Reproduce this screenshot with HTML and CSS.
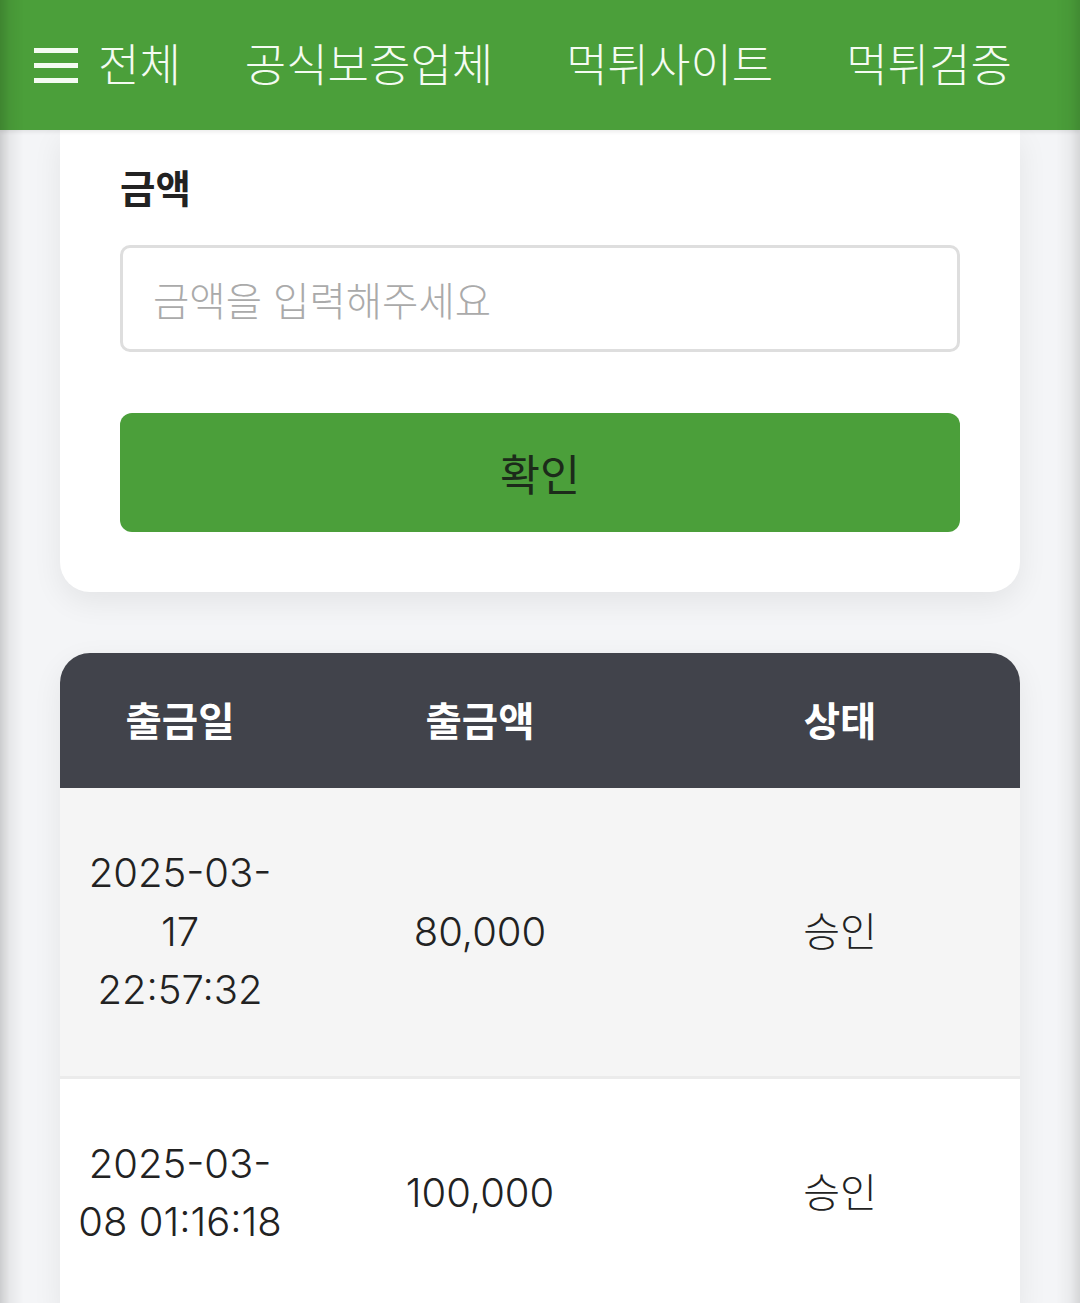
FILE: index.html
```html
<!DOCTYPE html>
<html lang="ko">
<head>
<meta charset="utf-8">
<title>출금</title>
<link rel="stylesheet" href="styles.css">
</head>
<body>
<div class="edge-shade"></div>
<header class="topbar">
  <nav class="nav">
    <a class="nav-item nav-first" href="#">
      <span class="burger"><span></span><span></span><span></span></span>
      <span>전체</span>
    </a>
    <a class="nav-item" href="#">공식보증업체</a>
    <a class="nav-item" href="#">먹튀사이트</a>
    <a class="nav-item" href="#">먹튀검증</a>
  </nav>
</header>
<main class="main">
  <section class="card">
    <label class="label" for="amount">금액</label>
    <input class="input" id="amount" type="text" placeholder="금액을 입력해주세요">
    <button class="btn" type="button">확인</button>
  </section>

  <section class="table">
    <div class="thead">
      <div class="cell">출금일</div>
      <div class="cell">출금액</div>
      <div class="cell">상태</div>
    </div>
    <div class="row row-alt">
      <div class="cell">2025-03-<br>17<br>22:57:32</div>
      <div class="cell">80,000</div>
      <div class="cell">승인</div>
    </div>
    <div class="row">
      <div class="cell">2025-03-<br>08 01:16:18</div>
      <div class="cell">100,000</div>
      <div class="cell">승인</div>
    </div>
  </section>
</main>
</body>
</html>
```

FILE: styles.css
```css
* { box-sizing: border-box; }

html, body {
  margin: 0;
  padding: 0;
}

body {
  background: #f4f5f7;
  font-family: Inter, "Noto Sans CJK KR", sans-serif;
  color: #222;
  overflow: hidden;
}

.edge-shade {
  position: fixed;
  inset: 0;
  pointer-events: none;
  z-index: 10;
  background:
    linear-gradient(to right, rgba(0,0,0,0.16) 0, rgba(0,0,0,0.05) 10px, rgba(0,0,0,0) 24px),
    linear-gradient(to left, rgba(0,0,0,0.12) 0, rgba(0,0,0,0.04) 10px, rgba(0,0,0,0) 24px);
}

.topbar {
  height: 130px;
  background: #4b9f3a;
  position: relative;
  z-index: 5;
  box-shadow: 0 2px 4px rgba(0,0,0,0.08);
}

.nav {
  height: 100%;
  display: flex;
  align-items: center;
  gap: 73px;
  padding: 0 0 6px 34px;
}

.nav-item {
  display: flex;
  align-items: center;
  color: #f4fbf2;
  text-decoration: none;
  font-family: "Noto Sans CJK KR", sans-serif;
  font-size: 45px;
  font-weight: 300;
  white-space: nowrap;
  line-height: 1;
}

.nav-first {
  gap: 20px;
  margin-right: -9px;
}

.burger {
  display: flex;
  flex-direction: column;
  gap: 10px;
  width: 44px;
  margin-top: 6px;
}

.burger span {
  display: block;
  height: 5px;
  background: #f4fbf2;
}

.main {
  padding: 0 60px;
}

.card {
  background: #fff;
  border-radius: 0 0 30px 30px;
  box-shadow: 0 10px 30px rgba(0,0,0,0.07);
  padding: 30px 60px 60px;
  display: flex;
  flex-direction: column;
}

.label {
  font-family: "Noto Sans CJK KR", sans-serif;
  font-size: 38.5px;
  font-weight: 700;
  line-height: 52px;
  color: #222;
}

.input {
  margin-top: 33px;
  height: 107px;
  border: 3px solid #dedede;
  border-radius: 10px;
  padding: 0 30px;
  font-family: "Noto Sans CJK KR", sans-serif;
  font-size: 39.5px;
  font-weight: 300;
  color: #222;
  outline: none;
}

.input::placeholder {
  color: #aaa;
}

.btn {
  margin-top: 61px;
  height: 119px;
  border: none;
  border-radius: 12px;
  background: #4b9f3a;
  color: #1c2b1a;
  font-family: "Noto Sans CJK KR", sans-serif;
  font-size: 43.5px;
  font-weight: 400;
}

.table {
  margin-top: 61px;
  background: #fff;
  border-radius: 30px 30px 0 0;
  overflow: hidden;
  box-shadow: 0 10px 30px rgba(0,0,0,0.07);
}

.thead, .row {
  display: grid;
  grid-template-columns: 240px 360px 360px;
  align-items: center;
}

.thead {
  height: 135px;
  background: #41434b;
  color: #fff;
  font-family: "Noto Sans CJK KR", sans-serif;
  font-size: 39.5px;
  font-weight: 700;
  padding-bottom: 4px;
}

.cell {
  text-align: center;
  padding: 0 12px;
}

.row {
  padding: 56px 0;
  font-size: 40px;
  font-weight: 300;
  line-height: 58.5px;
  color: #222;
  border-bottom: 3px solid #ebebeb;
}

.row-alt {
  background: #f5f5f5;
}
```
